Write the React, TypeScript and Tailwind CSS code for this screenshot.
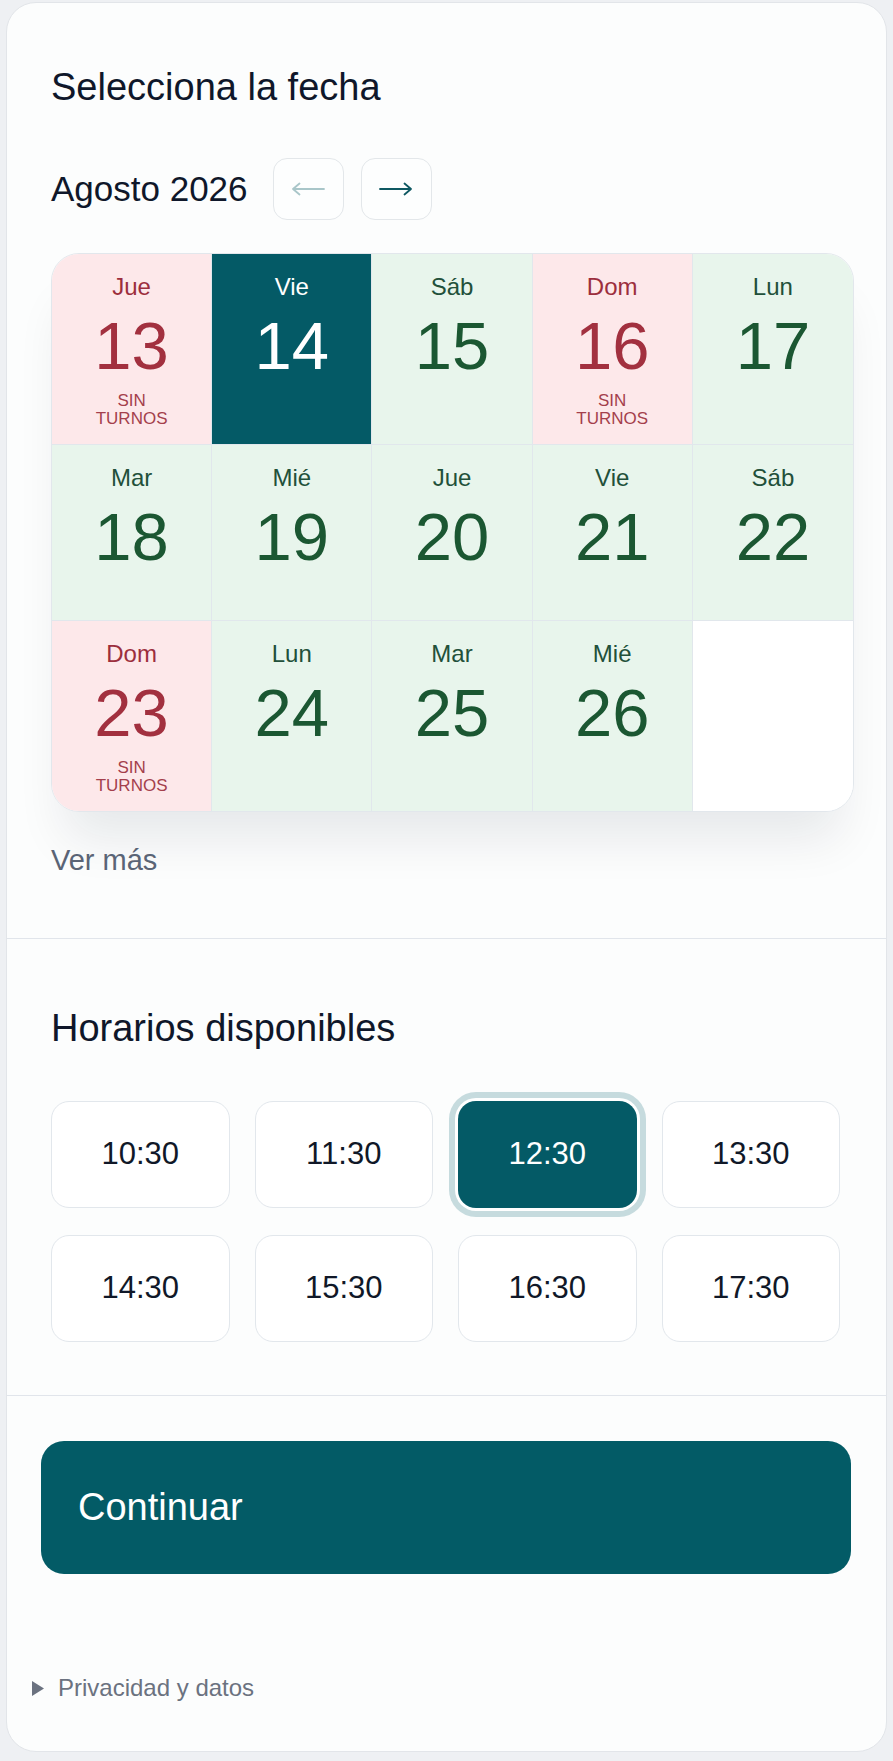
import React from "react";

type Cell = { d: string; n: string; kind: "red" | "green" | "sel" | "empty" };

const cells: Cell[] = [
  { d: "Jue", n: "13", kind: "red" },
  { d: "Vie", n: "14", kind: "sel" },
  { d: "Sáb", n: "15", kind: "green" },
  { d: "Dom", n: "16", kind: "red" },
  { d: "Lun", n: "17", kind: "green" },
  { d: "Mar", n: "18", kind: "green" },
  { d: "Mié", n: "19", kind: "green" },
  { d: "Jue", n: "20", kind: "green" },
  { d: "Vie", n: "21", kind: "green" },
  { d: "Sáb", n: "22", kind: "green" },
  { d: "Dom", n: "23", kind: "red" },
  { d: "Lun", n: "24", kind: "green" },
  { d: "Mar", n: "25", kind: "green" },
  { d: "Mié", n: "26", kind: "green" },
  { d: "", n: "", kind: "empty" },
];

const times = ["10:30", "11:30", "12:30", "13:30", "14:30", "15:30", "16:30", "17:30"];

function DayCell({ c, i }: { c: Cell; i: number }) {
  const col = i % 5;
  const row = Math.floor(i / 5);
  const borderR = col < 4 ? "border-r border-r-[#e1e7ec]" : "";
  const borderB = row < 2 ? "border-b border-b-[#e1e7ec]" : "";
  const bg =
    c.kind === "red"
      ? "bg-[#fde8ea]"
      : c.kind === "green"
      ? "bg-[#e8f5ec]"
      : c.kind === "sel"
      ? "bg-[#045a66]"
      : "bg-white";
  const labelColor =
    c.kind === "red" ? "text-[#9c2e3d]" : c.kind === "sel" ? "text-white" : "text-[#22503a]";
  const numColor =
    c.kind === "red" ? "text-[#a2303f]" : c.kind === "sel" ? "text-white" : "text-[#1b5732]";
  return (
    <div className={`flex min-h-[176px] flex-col items-center pt-[19px] pb-[16px] ${bg} ${borderR} ${borderB}`}>
      {c.kind !== "empty" && (
        <>
          <div className={`text-[24px] leading-[28px] ${labelColor}`}>{c.d}</div>
          <div className={`mt-[5px] text-[67px] leading-[80px] ${numColor}`}>{c.n}</div>
          {c.kind === "red" && (
            <div className="mt-[6px] text-center text-[17px] leading-[18px] text-[#a43f4c]">
              SIN
              <br />
              TURNOS
            </div>
          )}
        </>
      )}
    </div>
  );
}

function Arrow({ dir, color }: { dir: "left" | "right"; color: string }) {
  return (
    <svg width="34" height="14" viewBox="0 0 34 14" fill="none" stroke={color} strokeWidth="1.8" strokeLinecap="round" strokeLinejoin="round">
      {dir === "right" ? (
        <path d="M1 7 H32 M25.5 1.5 L32 7 L25.5 12.5" />
      ) : (
        <path d="M33 7 H2 M8.5 1.5 L2 7 L8.5 12.5" />
      )}
    </svg>
  );
}

export default function App() {
  return (
    <div className="min-h-screen bg-[#eef0f3] px-[6px] pt-[2px] pb-[8px] font-['Liberation_Sans',Arial,sans-serif]">
      <div className="overflow-hidden rounded-[30px] border border-[#e2e5e9] bg-[#fcfdfd]">
        {/* Section 1 */}
        <div className="px-[44px] pt-[61px] pb-[60px]">
          <h2 className="text-[38px] leading-[46px] text-[#0f172a]">Selecciona la fecha</h2>
          <div className="mt-[48px] flex h-[62px] items-center">
            <span className="text-[35px] leading-[42px] text-[#0f172a]">Agosto 2026</span>
            <div className="ml-[25px] flex gap-[17px]">
              <button className="flex h-[62px] w-[71px] items-center justify-center rounded-[14px] border border-[#e3e7ea] bg-[#fdfefe]">
                <Arrow dir="left" color="#a9c6c9" />
              </button>
              <button className="flex h-[62px] w-[71px] items-center justify-center rounded-[14px] border border-[#e3e7ea] bg-[#fdfefe]">
                <Arrow dir="right" color="#0e5862" />
              </button>
            </div>
          </div>
          <div className="mt-[33px] grid w-[803px] grid-cols-5 overflow-hidden rounded-[28px] border border-[#e2e7ec] shadow-[0_40px_50px_-14px_rgba(15,23,42,0.09)]">
            {cells.map((c, i) => (
              <DayCell key={i} c={c} i={i} />
            ))}
          </div>
          <div className="mt-[30px] text-[29px] leading-[36px] text-[#5a6476]">Ver más</div>
        </div>

        <div className="h-px bg-[#e1e5eb]" />

        {/* Section 2 */}
        <div className="px-[44px] pt-[66px] pb-[53px]">
          <h2 className="text-[38px] leading-[46px] text-[#0f172a]">Horarios disponibles</h2>
          <div className="mt-[50px] grid w-[789px] grid-cols-4 gap-x-[25px] gap-y-[27px]">
            {times.map((t) =>
              t === "12:30" ? (
                <button
                  key={t}
                  className="flex h-[107px] items-center justify-center rounded-[18px] bg-[#045a66] text-[31px] text-white ring-[6px] ring-[#c6dbde] ring-offset-[3px] ring-offset-white"
                >
                  {t}
                </button>
              ) : (
                <button
                  key={t}
                  className="flex h-[107px] items-center justify-center rounded-[18px] border-[1.5px] border-[#e2e7ec] bg-white text-[31px] text-[#101828]"
                >
                  {t}
                </button>
              )
            )}
          </div>
        </div>

        <div className="h-px bg-[#e1e5eb]" />

        {/* Section 3 */}
        <div className="pt-[45px] pb-[49px]">
          <div className="pl-[34px] pr-[35px]">
            <button className="flex h-[133px] w-full items-center rounded-[23px] bg-[#035b66] pl-[37px] text-[38px] text-white">
              Continuar
            </button>
          </div>
          <div className="mt-[100px] flex items-center pl-[24px] text-[24px] leading-[28px] text-[#6b7280]">
            <svg width="14" height="15" viewBox="0 0 14 15" className="mr-[13px]">
              <polygon points="1,0 13,7.5 1,15" fill="#6b7280" />
            </svg>
            <span>Privacidad y datos</span>
          </div>
        </div>
      </div>
    </div>
  );
}
